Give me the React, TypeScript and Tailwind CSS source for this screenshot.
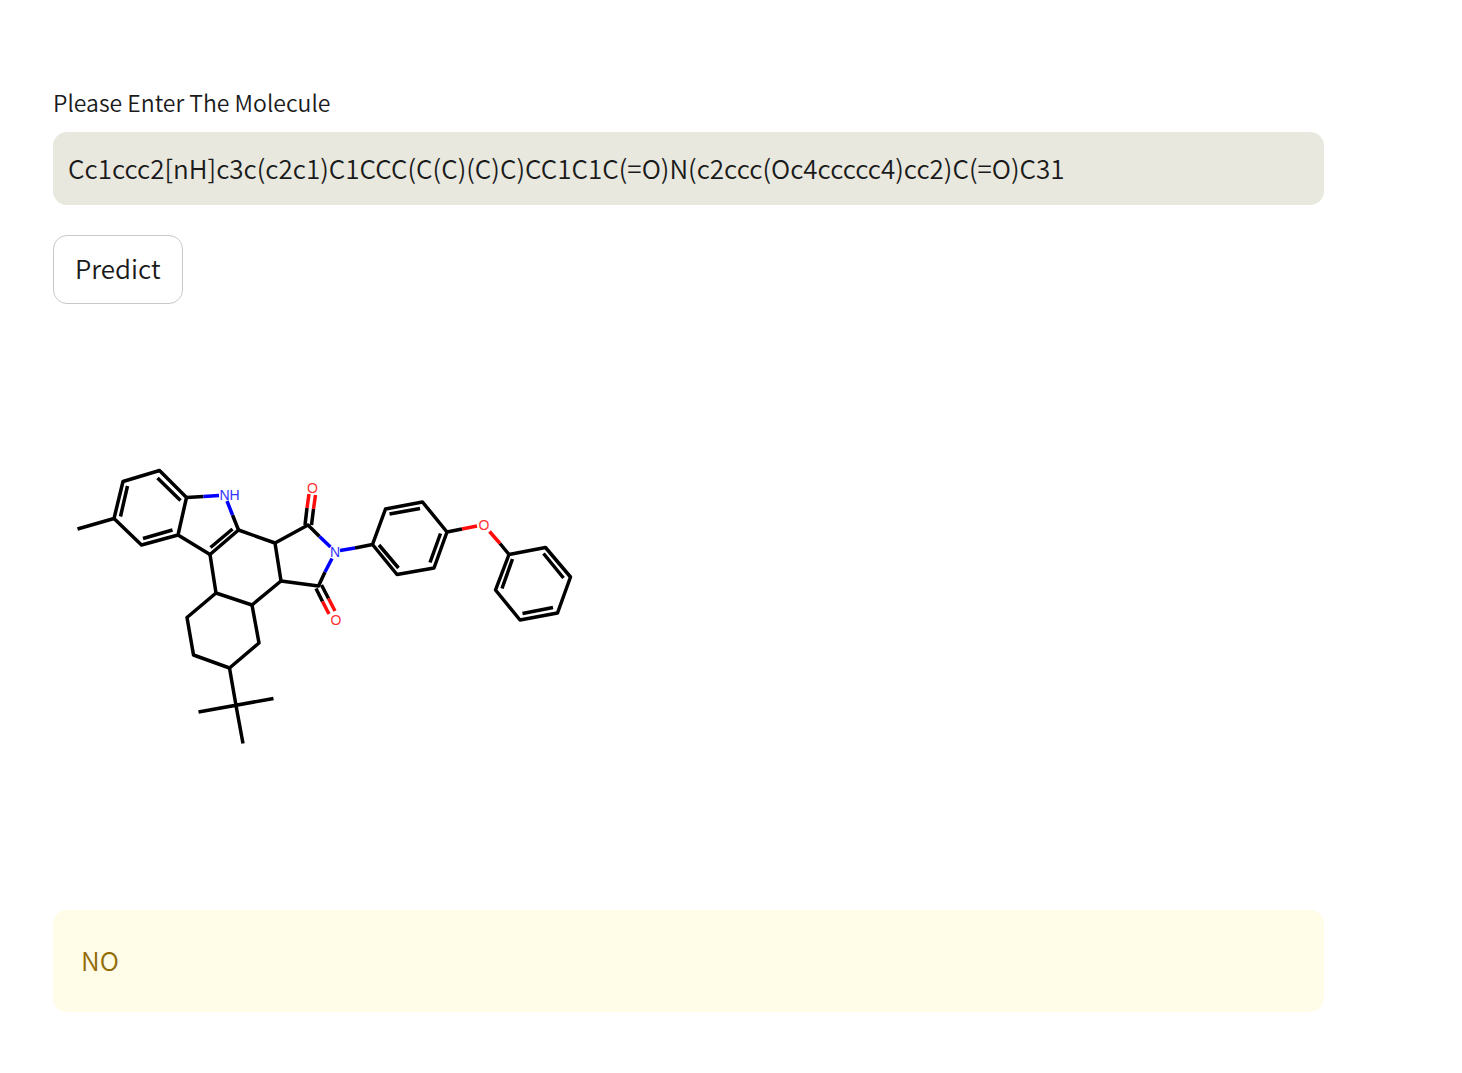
import { useState } from "react";

const FONT = "font-['Noto_Sans_CJK_SC','Open_Sans',sans-serif] font-[350]";

function MoleculeDrawing() {
  return (
    <svg
      viewBox="53 332 549 549"
      role="img"
      aria-label="Molecule structure"
      className="w-full max-w-[549px] aspect-square"
      fill="none"
      strokeWidth="3.5"
      strokeLinecap="butt"
      strokeLinejoin="round"
    >
      <g stroke="#000000">
        {/* Methyl and fused benzene ring */}
        <path d="M77.5 529L114 518.5L123 481.5L159.5 470.5L186.5 497.5L178 535L141.5 545L114 518.5" />
        <path d="M120.5 516.5L127.5 486M157.5 478L180.5 500.5M172.5 530L143 538.5" />
        {/* Five-membered ring */}
        <path d="M186.5 497.5L203.5 496.5M178 535L210 554.5L238.5 530L232.5 515M210.5 547.5L232.5 529" />
        {/* Central ring */}
        <path d="M238.5 530L275 543L281 581L252 605L216 593L210 554.5" />
        {/* Saturated ring */}
        <path d="M252 605L259 643L229.5 668L193.5 655L187 617.5L216 593" />
        {/* Tert-butyl */}
        <path d="M229.5 668L236 705.5L243 743.5M198.5 712L273.5 698.5" />
        {/* Imide ring */}
        <path d="M275 543L308 525L319.5 536.5M281 581L318.5 586L325 572" />
        <path d="M305 525L307 508M311.5 525L313.5 509M316 588.5L322.5 601.5M321.5 585L328.5 598.5" />
        {/* Phenylene ring */}
        <path d="M355 548L372.5 544.5L385.5 509L422.5 502L447 532L434 568L397 574.5L372.5 544.5" />
        <path d="M379 545L398.5 568M389.5 514L420 508.5M440.5 533.5L430 562.5M447 532L462 529" />
        {/* Terminal phenyl ring */}
        <path d="M500 543.5L509 554.5L545.5 547.5L570.5 577L557.5 613L520 620L495.5 590L509 554.5" />
        <path d="M512.5 559L502 588.5M543.5 553.5L563.5 578M553 607.5L522.5 613.5" />
      </g>
      <g stroke="#0000ff">
        <path d="M203.5 496.5L219 495.5M232.5 515L227 501M319.5 536.5L330.5 547M325 572L332 558.5M340 550.5L355 548" />
      </g>
      <g stroke="#ff0d0d">
        <path d="M307 508L309 494M313.5 509L315.5 495M322.5 601.5L329 614M328.5 598.5L335 611M462 529L477 526M489.5 531.5L500 543.5" />
      </g>
      <g
        className="font-['Liberation_Sans',sans-serif]"
        fontSize="14"
        textAnchor="middle"
        stroke="none"
      >
        <text x="229.5" y="500" fill="#3333ff">NH</text>
        <text x="335" y="557" fill="#3333ff">N</text>
        <text x="312.5" y="493" fill="#ff3333">O</text>
        <text x="336" y="625" fill="#ff3333">O</text>
        <text x="484" y="530" fill="#ff3333">O</text>
      </g>
    </svg>
  );
}

export default function App() {
  const [molecule, setMolecule] = useState(
    "Cc1ccc2[nH]c3c(c2c1)C1CCC(C(C)(C)C)CC1C1C(=O)N(c2ccc(Oc4ccccc4)cc2)C(=O)C31",
  );

  return (
    <main className={`${FONT} min-h-screen bg-white pt-[84px] pr-[138px] pb-[60px] pl-[53px] text-[#1a1a1a]`}>
      <form className="flex flex-col items-start" onSubmit={(e) => e.preventDefault()}>
        <label htmlFor="molecule" className="mb-3 text-[23px] leading-[36px]">
          Please Enter The Molecule
        </label>
        <input
          id="molecule"
          type="text"
          value={molecule}
          onChange={(e) => setMolecule(e.target.value)}
          className="h-[73px] w-full rounded-[14px] bg-[#e8e8df] px-[15px] pb-[2px] text-[26px] outline-none"
        />
        <button
          type="submit"
          className="mt-[30px] h-[69px] rounded-[14px] border border-[#c8c8c8] bg-white px-[21px] pb-[4px] text-[26px]"
        >
          Predict
        </button>
      </form>
      <div className="mt-[28px] mb-[29px]">
        <MoleculeDrawing />
      </div>
      <div role="alert" className="rounded-[14px] bg-[#fffce7] px-[28px] pt-[29px] pb-[31px] text-[26px] leading-[42px] text-[#926c05]">
        NO
      </div>
    </main>
  );
}
